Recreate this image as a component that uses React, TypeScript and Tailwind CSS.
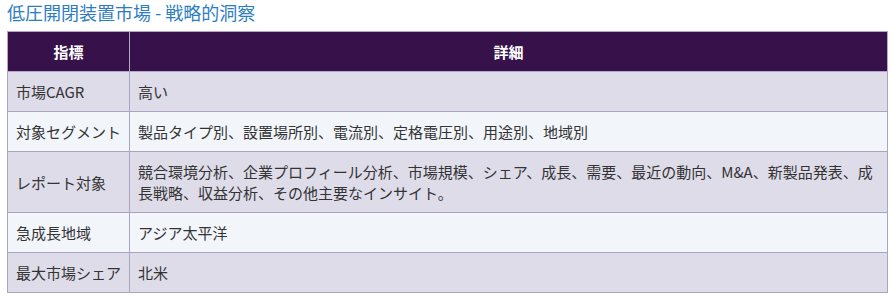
import React from "react";

const rows: [string, string][] = [
  ["市場CAGR", "高い"],
  ["対象セグメント", "製品タイプ別、設置場所別、電流別、定格電圧別、用途別、地域別"],
  [
    "レポート対象",
    "競合環境分析、企業プロフィール分析、市場規模、シェア、成長、需要、最近の動向、M&A、新製品発表、成長戦略、収益分析、その他主要なインサイト。",
  ],
  ["急成長地域", "アジア太平洋"],
  ["最大市場シェア", "北米"],
];

export default function App() {
  return (
    <div
      className="bg-white w-[895px] h-[301px] px-[7px] pt-0"
      style={{ fontFamily: '"Noto Sans CJK JP", "Noto Sans", sans-serif' }}
    >
      <h2 className="text-[18px] leading-[24px] text-[#2e7ebf] font-normal mb-[7px]">
        低圧開閉装置市場 - 戦略的洞察
      </h2>
      <table className="w-[881px] border-collapse text-[15px] leading-[21px] text-[#333]">
        <thead>
          <tr className="bg-[#36114a] text-white">
            <th className="w-[121px] border border-[#b7a6cb] py-[9px] px-[8px] font-bold text-center">
              指標
            </th>
            <th className="border border-[#b7a6cb] py-[9px] px-[8px] font-bold text-center">
              詳細
            </th>
          </tr>
        </thead>
        <tbody>
          {rows.map(([k, v], i) => (
            <tr key={k} className={i % 2 === 0 ? "bg-[#dfdcea]" : "bg-[#f2f6fb]"}>
              <td className="border border-[#aaa4c2] py-[9px] px-[8px] align-middle whitespace-nowrap">
                {k}
              </td>
              <td className="border border-[#aaa4c2] py-[9px] px-[8px] align-middle">{v}</td>
            </tr>
          ))}
        </tbody>
      </table>
    </div>
  );
}
